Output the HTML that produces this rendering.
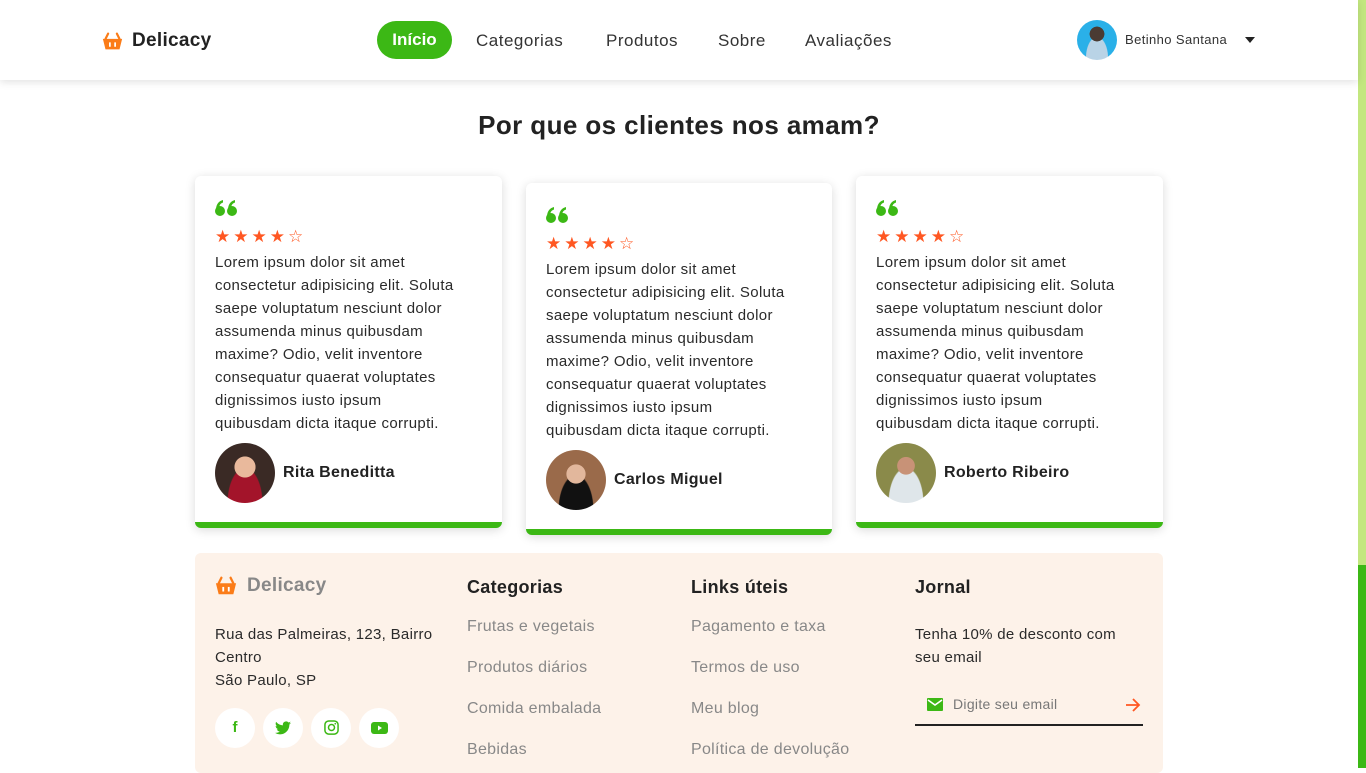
<!DOCTYPE html>
<html><head><meta charset="utf-8"><style>
*{margin:0;padding:0;box-sizing:border-box}
body{width:1366px;height:768px;overflow:hidden;background:#fff;font-family:"Liberation Sans",sans-serif;color:#222;position:relative}
.hdr{position:absolute;left:0;top:0;width:1358px;height:80px;background:#fff;box-shadow:0 2px 8px rgba(0,0,0,.12);z-index:2}
.abs{position:absolute}
.logo{left:102px;top:30px;display:flex;align-items:center;gap:9px;font-size:19px;font-weight:bold;color:#222;letter-spacing:.3px}
.nav a{position:absolute;top:31px;font-size:17px;color:#333;text-decoration:none;letter-spacing:.5px}
.pill{left:377px;top:21px;width:75px;height:38px;border-radius:19px;background:#3cb815;color:#fff;font-size:17px;font-weight:bold;text-align:center;line-height:38px}
.sb{position:absolute;left:1358px;top:0;width:8px;height:768px;background:#c3e77f}
.sb i{position:absolute;left:0;top:565px;width:8px;height:203px;background:#3cb815}
h2{position:absolute;top:110px;left:0;width:1358px;text-align:center;font-size:26px;font-weight:bold;color:#222;letter-spacing:.4px}
.card{position:absolute;width:307px;height:352px;background:#fff;border-radius:6px;box-shadow:0 2px 10px rgba(0,0,0,.15);border-bottom:6px solid #3cb815;padding:24px 20px 0}
.q{height:16px}
.st{color:#ff5722;font-size:17px;letter-spacing:3px;margin-top:11px;height:22px}
.txt{font-size:15px;line-height:23px;color:#2a2a2a;margin-top:2px;width:244px;letter-spacing:.35px}
.au{display:flex;align-items:center;gap:8px;margin-top:8px;font-weight:bold;font-size:16px;letter-spacing:.3px}
.av{width:60px;height:60px;border-radius:50%}
.ft{position:absolute;left:195px;top:553px;width:968px;height:220px;background:#fdf2e9;border-radius:6px}
.ft h4{position:absolute;top:24px;font-size:18px;font-weight:bold;color:#222;letter-spacing:.3px}
.ft .l{position:absolute;font-size:16px;color:#888;letter-spacing:.3px}
.ft p{position:absolute;font-size:15px;line-height:23px;color:#2a2a2a;letter-spacing:.3px}
.soc{position:absolute;top:155px;width:40px;height:40px;border-radius:50%;background:#fff;color:#3cb815;text-align:center;line-height:40px;font-weight:bold;font-size:15px}
</style></head><body>
<div class="hdr">
 <div class="abs logo"><svg width="21" height="21" viewBox="0 0 24 24"><path d="M7 3 L4 9 M17 3 L20 9" stroke="#fb7c18" stroke-width="2.5" fill="none" stroke-linecap="round"/><path d="M1 9h22l-3 12H4z" fill="#fb7c18"/><rect x="8" y="13" width="2" height="5" fill="#fff"/><rect x="14" y="13" width="2" height="5" fill="#fff"/></svg>Delicacy</div>
 <div class="abs pill">Início</div>
 <div class="nav"><a style="left:476px">Categorias</a><a style="left:606px">Produtos</a><a style="left:718px">Sobre</a><a style="left:805px">Avaliações</a></div>
 <div class="abs" style="left:1077px;top:20px;width:40px;height:40px;border-radius:50%;background:radial-gradient(circle at 50% 35%,#4a3b33 0 22%,transparent 23%),radial-gradient(ellipse at 50% 95%,#b9d3e6 0 38%,transparent 40%),#2ab0e8"></div>
 <div class="abs" style="left:1125px;top:32px;font-size:13px;color:#333;letter-spacing:.4px">Betinho Santana</div>
 <div class="abs" style="left:1245px;top:37px;border:5px solid transparent;border-top:6px solid #222;border-bottom:0"></div>
</div>
<div class="sb"><i></i></div>
<h2>Por que os clientes nos amam?</h2>

<svg width="0" height="0" style="position:absolute"><defs><g id="qq"><circle cx="5" cy="11" r="5" fill="#3cb815"/><path d="M1 10 C1 4 4 1 8 0 L8 2.5 C5 3.5 4 6 4.5 8z" fill="#3cb815"/><circle cx="17" cy="11" r="5" fill="#3cb815"/><path d="M13 10 C13 4 16 1 20 0 L20 2.5 C17 3.5 16 6 16.5 8z" fill="#3cb815"/></g></defs></svg>

<div class="card" style="left:195px;top:176px">
 <div class="q"><svg width="22" height="16" viewBox="0 0 22 16"><use href="#qq"/></svg></div><div class="st">★★★★☆</div>
 <div class="txt">Lorem ipsum dolor sit amet consectetur adipisicing elit. Soluta saepe voluptatum nesciunt dolor assumenda minus quibusdam maxime? Odio, velit inventore consequatur quaerat voluptates dignissimos iusto ipsum quibusdam dicta itaque corrupti.</div>
 <div class="au"><div class="av" style="background:radial-gradient(circle at 50% 40%,#e9b99c 0 22%,transparent 23%),radial-gradient(ellipse at 50% 100%,#a3142a 0 40%,transparent 42%),#3a2a25"></div>Rita Beneditta</div>
</div>
<div class="card" style="left:526px;top:183px;width:306px">
 <div class="q"><svg width="22" height="16" viewBox="0 0 22 16"><use href="#qq"/></svg></div><div class="st">★★★★☆</div>
 <div class="txt">Lorem ipsum dolor sit amet consectetur adipisicing elit. Soluta saepe voluptatum nesciunt dolor assumenda minus quibusdam maxime? Odio, velit inventore consequatur quaerat voluptates dignissimos iusto ipsum quibusdam dicta itaque corrupti.</div>
 <div class="au"><div class="av" style="background:radial-gradient(circle at 50% 40%,#e2b79c 0 20%,transparent 21%),radial-gradient(ellipse at 50% 100%,#111 0 40%,transparent 42%),#9a6a4a"></div>Carlos Miguel</div>
</div>
<div class="card" style="left:856px;top:176px">
 <div class="q"><svg width="22" height="16" viewBox="0 0 22 16"><use href="#qq"/></svg></div><div class="st">★★★★☆</div>
 <div class="txt">Lorem ipsum dolor sit amet consectetur adipisicing elit. Soluta saepe voluptatum nesciunt dolor assumenda minus quibusdam maxime? Odio, velit inventore consequatur quaerat voluptates dignissimos iusto ipsum quibusdam dicta itaque corrupti.</div>
 <div class="au"><div class="av" style="background:radial-gradient(circle at 50% 38%,#c89277 0 18%,transparent 19%),radial-gradient(ellipse at 50% 100%,#dfe6ea 0 40%,transparent 42%),#8a8a4a"></div>Roberto Ribeiro</div>
</div>

<div class="ft">
 <div class="abs" style="left:20px;top:22px;display:flex;align-items:center;gap:10px;font-size:19px;font-weight:bold;color:#888;letter-spacing:.3px"><svg width="22" height="22" viewBox="0 0 24 24"><path d="M7 3 L4 9 M17 3 L20 9" stroke="#fb7c18" stroke-width="2.5" fill="none" stroke-linecap="round"/><path d="M1 9h22l-3 12H4z" fill="#fb7c18"/><rect x="8" y="13" width="2" height="5" fill="#fff"/><rect x="14" y="13" width="2" height="5" fill="#fff"/></svg>Delicacy</div>
 <p style="left:20px;top:70px;width:240px">Rua das Palmeiras, 123, Bairro Centro<br>São Paulo, SP</p>
 <div class="soc" style="left:20px">f</div>
 <div class="soc" style="left:68px"><svg width="16" height="14" viewBox="0 0 24 20" style="margin-top:13px"><path d="M24 2.4c-.9.4-1.8.7-2.8.8 1-.6 1.8-1.6 2.2-2.7-1 .6-2 1-3.1 1.2A4.9 4.9 0 0 0 11.9 6 14 14 0 0 1 1.7.9a4.9 4.9 0 0 0 1.5 6.6c-.8 0-1.6-.3-2.2-.6 0 2.4 1.7 4.4 3.9 4.8-.7.2-1.5.2-2.2.1.6 2 2.4 3.4 4.6 3.4A9.9 9.9 0 0 1 0 17.3 14 14 0 0 0 7.5 19.5c9 0 14-7.5 14-14v-.6c1-.7 1.8-1.6 2.5-2.5z" fill="#3cb815"/></svg></div>
 <div class="soc" style="left:116px"><svg width="15" height="15" viewBox="0 0 16 16" style="margin-top:12px"><rect x="1" y="1" width="14" height="14" rx="4" fill="none" stroke="#3cb815" stroke-width="1.6"/><circle cx="8" cy="8" r="3.2" fill="none" stroke="#3cb815" stroke-width="1.6"/><circle cx="12" cy="4" r=".9" fill="#3cb815"/></svg></div>
 <div class="soc" style="left:164px"><svg width="17" height="12" viewBox="0 0 17 12" style="margin-top:14px"><rect width="17" height="12" rx="3" fill="#3cb815"/><path d="M7 3.5v5l4-2.5z" fill="#fff"/></svg></div>
 <h4 style="left:272px">Categorias</h4>
 <div class="l" style="left:272px;top:65px">Frutas e vegetais</div>
 <div class="l" style="left:272px;top:106px">Produtos diários</div>
 <div class="l" style="left:272px;top:147px">Comida embalada</div>
 <div class="l" style="left:272px;top:188px">Bebidas</div>
 <h4 style="left:496px">Links úteis</h4>
 <div class="l" style="left:496px;top:65px">Pagamento e taxa</div>
 <div class="l" style="left:496px;top:106px">Termos de uso</div>
 <div class="l" style="left:496px;top:147px">Meu blog</div>
 <div class="l" style="left:496px;top:188px">Política de devolução</div>
 <h4 style="left:720px">Jornal</h4>
 <p style="left:720px;top:70px;width:215px">Tenha 10% de desconto com seu email</p>
 <svg class="abs" style="left:732px;top:145px" width="16" height="13" viewBox="0 0 16 13"><rect width="16" height="13" rx="1" fill="#3cb815"/><path d="M1 2l7 5 7-5" stroke="#fff" stroke-width="1.6" fill="none"/></svg>
 <div class="l" style="left:758px;top:143px;font-size:14px;color:#777">Digite seu email</div>
 <svg class="abs" style="left:930px;top:145px" width="16" height="14" viewBox="0 0 16 14"><path d="M1 7h13M8 1l6 6-6 6" stroke="#ff5722" stroke-width="1.8" fill="none"/></svg>
 <div class="abs" style="left:720px;top:171px;width:228px;height:1.5px;background:#222"></div>
</div>
</body></html>
